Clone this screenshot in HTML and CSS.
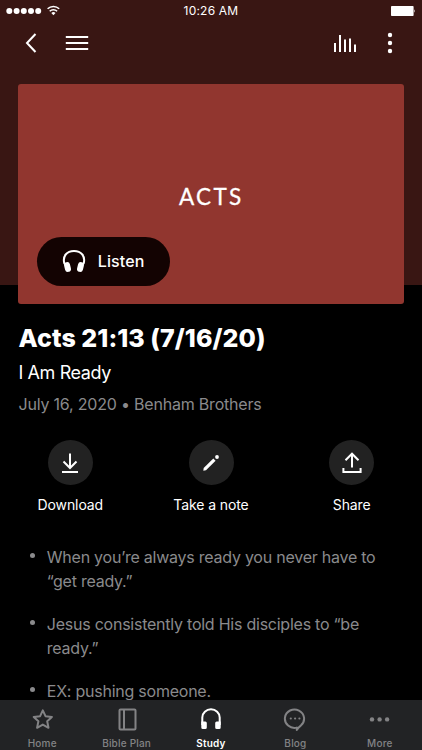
FILE: index.html
```html
<!DOCTYPE html>
<html lang="en">
<head>
  <meta charset="UTF-8" />
  <meta name="viewport" content="width=device-width, initial-scale=1.0"/>
  <title>Acts 21:13 (7/16/20)</title>
  <link rel="stylesheet" href="styles.css">
</head>
<body>
  <div class="app">
    <header class="top">
      <div class="status-bar">
        <div class="signal">
          <svg width="54" height="14" viewBox="0 0 54 14" fill="#fff">
            <circle cx="3.3" cy="7" r="3"/><circle cx="10.6" cy="7" r="3"/><circle cx="17.8" cy="7" r="3"/><circle cx="25" cy="7" r="3"/><circle cx="32.2" cy="7" r="3"/>
            <g fill="none" stroke="#fff" stroke-width="1.5">
              <path d="M41.6 4.8a8.2 8.2 0 0 1 11.6 0"/>
              <path d="M43.7 7.2a5.2 5.2 0 0 1 7.4 0"/>
            </g>
            <path d="M45.3 9a3 3 0 0 1 4.2 0l-2.1 2.2z"/>
          </svg>
        </div>
        <span class="clock">10:26 AM</span>
        <svg class="battery" width="26" height="12" viewBox="0 0 26 12" fill="#fff">
          <rect x="1" y="1" width="22.6" height="10" rx="0.8"/>
          <path d="M24.2 4.3q1.5 1.7 0 3.4z"/>
        </svg>
      </div>
      <nav class="nav-bar">
        <svg class="nav-back" width="12" height="22" viewBox="0 0 12 22"><path d="M10.5 2 2 11l8.5 9"/></svg>
        <svg class="nav-menu" width="24" height="18" viewBox="0 0 24 18"><path d="M.8 3h22.400M.8 9h22.400M.8 15h22.400"/></svg>
        <svg class="nav-bars" width="26" height="20" viewBox="0 0 26 20"><path d="M2 10v9M7 2v17M12 6.500v12.500M17 5.500v13.500M22 11.500v7.500"/></svg>
        <svg class="nav-dots" width="6" height="22" viewBox="0 0 6 22" fill="#fff"><circle cx="3" cy="3" r="2.2"/><circle cx="3" cy="11" r="2.2"/><circle cx="3" cy="19" r="2.2"/></svg>
      </nav>
    </header>

    <section class="hero">
      <h2 class="series">ACTS</h2>
      <button class="listen-btn">
        <svg width="24" height="24" viewBox="0 0 24 24">
          <path d="M2.500 15C0 7 5 2 12 2s12 5 9.500 13" fill="none" stroke="#fff" stroke-width="2"/>
          <rect x="2.500" y="13" width="6" height="10" rx="3" fill="#fff" transform="rotate(-14 5.500 18)"/>
          <rect x="15.500" y="13" width="6" height="10" rx="3" fill="#fff" transform="rotate(14 18.500 18)"/>
        </svg>
        <span>Listen</span>
      </button>
    </section>

    <main class="content">
      <h1>Acts 21:13 (7/16/20)</h1>
      <p class="subtitle">I Am Ready</p>
      <p class="meta">July 16, 2020 • Benham Brothers</p>

      <div class="actions">
        <div class="action">
          <span class="circle">
            <svg width="24" height="24" viewBox="0 0 24 24"><path d="M12 2.500V17M5.500 10.500 12 17l6.500-6.500M4 21h16"/></svg>
          </span>
          <span>Download</span>
        </div>
        <div class="action">
          <span class="circle">
            <svg width="24" height="24" viewBox="0 0 24 24"><path class="solid" d="M4.300 19.700l.4-2.700L14.300 7.400l2.300 2.300L7 19.300z"/><circle class="solid" cx="18" cy="6" r="1.900"/></svg>
          </span>
          <span>Take a note</span>
        </div>
        <div class="action">
          <span class="circle">
            <svg width="24" height="24" viewBox="0 0 24 24"><path d="M12 16.500V2.500M5.500 9.200 12 2.700l6.500 6.500M3.400 17v4h17.200v-4"/></svg>
          </span>
          <span>Share</span>
        </div>
      </div>

      <ul class="notes">
        <li>When you’re always ready you never have to “get ready.”</li>
        <li>Jesus consistently told His disciples to “be ready.”</li>
        <li>EX: pushing someone.</li>
      </ul>
    </main>

    <nav class="tab-bar">
      <a class="tab">
        <svg width="24" height="24" viewBox="0 0 24 24"><path d="M12.800 3.300l2.700 5.900 6.400.8-4.700 4.300 1.300 6.500-5.700-3.200-5.700 3.200 1.300-6.500L3.700 10l6.400-.8z"/></svg>
        <span>Home</span>
      </a>
      <a class="tab">
        <svg width="24" height="24" viewBox="0 0 24 24"><rect x="4.500" y="2.500" width="16" height="20" rx="1"/><path d="M9 2.500v20"/></svg>
        <span>Bible Plan</span>
      </a>
      <a class="tab active">
        <svg width="24" height="24" viewBox="0 0 24 24"><path d="M3.300 18v-7.500a8.700 8.200 0 0 1 17.400 0V18"/><path class="solid" d="M2.300 14.500h4A1.500 1.500 0 0 1 7.800 16v4.500A1.500 1.500 0 0 1 6.300 22H3.800a1.500 1.500 0 0 1-1.500-1.500zM21.700 14.500h-4a1.500 1.500 0 0 0-1.500 1.500v4.500a1.500 1.500 0 0 0 1.500 1.500h2.500a1.500 1.500 0 0 0 1.500-1.500z"/></svg>
        <span>Study</span>
      </a>
      <a class="tab">
        <svg width="24" height="24" viewBox="0 0 24 24"><path d="M13.800 20.600a9.600 9.200 0 1 1 4-2q-2.300 1.800-4 4.300z"/><g class="solid"><circle cx="7.800" cy="11.500" r="1.100"/><circle cx="12.100" cy="11.500" r="1.100"/><circle cx="16.400" cy="11.500" r="1.100"/></g></svg>
        <span>Blog</span>
      </a>
      <a class="tab">
        <svg width="24" height="24" viewBox="0 0 24 24"><g class="solid"><circle cx="4" cy="12.400" r="2.200"/><circle cx="11.600" cy="12.400" r="2.200"/><circle cx="19.100" cy="12.400" r="2.200"/></g></svg>
        <span>More</span>
      </a>
    </nav>
  </div>
</body>
</html>
```
FILE: styles.css
```css
* {
  box-sizing: border-box;
  margin: 0;
  padding: 0;
}

body {
  background: #000;
  color: #fff;
  font-family: Inter, 'Liberation Sans', sans-serif;
}

svg {
  display: block;
  flex: none;
}

.app {
  display: flex;
  flex-direction: column;
  height: 750px;
  overflow: hidden;
  background: linear-gradient(#391613 285px, #000 285px);
}

.top {
  flex: none;
  height: 83.5px;
}

.status-bar {
  display: grid;
  grid-template-columns: 1fr auto 1fr;
  align-items: center;
  height: 21px;
  padding: 0 6px;
}

.clock {
  font-size: 12px;
  letter-spacing: 0.2px;
}

.battery {
  justify-self: end;
}

.nav-bar {
  display: flex;
  align-items: center;
  height: 44px;
  padding: 0 29px 0 25px;
}

.nav-bar path {
  fill: none;
  stroke: #fff;
  stroke-width: 2;
}

.nav-menu {
  margin-left: 28px;
}

.nav-bars {
  margin-left: auto;
}

.nav-dots {
  margin-left: 28px;
}

.hero {
  display: flex;
  flex-direction: column;
  flex: none;
  height: 220px;
  margin: 0 18.3px;
  padding: 99px 18px 18px 18.5px;
  border-radius: 3px;
  background: #91362f;
}

.series {
  font-family: Lato, sans-serif;
  font-size: 22.5px;
  font-weight: 400;
  line-height: 28px;
  letter-spacing: 2.3px;
  text-align: center;
  -webkit-text-stroke: 0.3px #fff;
}

.listen-btn {
  display: flex;
  align-items: center;
  gap: 12px;
  width: 133px;
  height: 49px;
  margin-top: auto;
  padding-left: 25px;
  border: none;
  border-radius: 25px;
  background: #130302;
  color: #fff;
  font-family: inherit;
  font-size: 16px;
  font-weight: 500;
  letter-spacing: 0.1px;
}

.content {
  flex: 1;
  min-height: 0;
  overflow: hidden;
  padding: 18.5px 18.5px 0;
}

h1 {
  font-size: 25px;
  font-weight: 800;
  line-height: 32px;
  letter-spacing: 0.06px;
}

.subtitle {
  margin-top: 6px;
  font-size: 18px;
  line-height: 26px;
  letter-spacing: -0.4px;
}

.meta {
  margin-top: 7px;
  color: #8a8a8c;
  font-size: 16px;
  line-height: 22px;
  letter-spacing: -0.2px;
}

.actions {
  display: flex;
  justify-content: space-between;
  margin: 25px -18.5px 0;
}

.action {
  display: flex;
  flex-direction: column;
  align-items: center;
  gap: 10px;
  width: 140.6px;
  font-size: 14px;
  line-height: 20px;
  letter-spacing: -0.1px;
}

.circle {
  display: flex;
  align-items: center;
  justify-content: center;
  width: 45px;
  height: 45px;
  border-radius: 50%;
  background: #222;
}

.circle path {
  fill: none;
  stroke: #fff;
  stroke-width: 2;
}

.circle .solid {
  fill: #fff;
  stroke: none;
}

.notes {
  margin-top: 31px;
  list-style: none;
  color: #8a8a8c;
  font-size: 16px;
  line-height: 23.5px;
  letter-spacing: -0.24px;
}

.notes li {
  display: flex;
  margin-bottom: 20px;
}

.notes li::before {
  content: '';
  flex: none;
  width: 5px;
  height: 5px;
  margin: 7px 12px 0 11.3px;
  border-radius: 50%;
  background: #8a8a8c;
}

.tab-bar {
  display: flex;
  flex: none;
  height: 50px;
  padding-top: 7px;
  background: #222325;
}

.tab {
  display: flex;
  flex: 1;
  flex-direction: column;
  align-items: center;
  gap: 5px;
  color: #838385;
  font-size: 10px;
  font-weight: 500;
  line-height: 14px;
  letter-spacing: 0.2px;
}

.tab svg {
  fill: none;
  stroke: currentColor;
  stroke-width: 2;
  stroke-linejoin: round;
}

.tab .solid {
  fill: currentColor;
  stroke: none;
}

.tab.active {
  color: #fff;
  font-weight: 600;
}
```
